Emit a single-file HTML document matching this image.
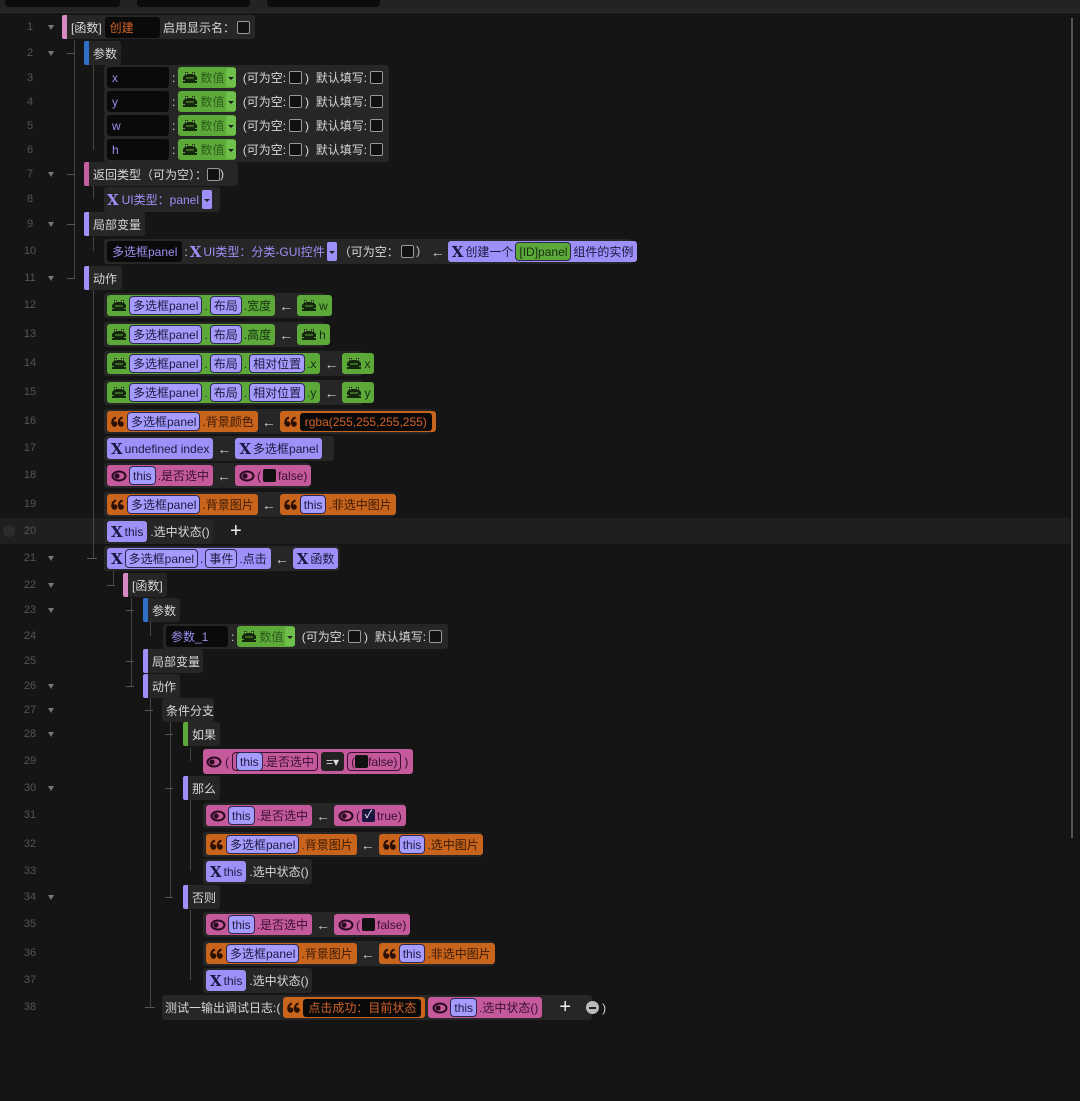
<!DOCTYPE html>
<html><head><meta charset="utf-8"><style>
*{box-sizing:border-box;margin:0;padding:0}
body{width:1080px;height:1101px;background:#151515;position:relative;overflow:hidden;font-family:"Liberation Sans","Noto Sans CJK SC",sans-serif;font-size:12px;color:#d8d8d8}
.top{position:absolute;left:0;top:0;width:1080px;height:13px;background:#232323;border-bottom:1px solid #2e2e2e}
.tab{position:absolute;top:0;height:7px;background:#0c0c0c;border-radius:0 0 4px 4px}
.ln{position:absolute;left:14px;width:32px;text-align:center;color:#555;font-size:11px;line-height:14px}
.fold{position:absolute;left:48px;width:0;height:0;border-left:3px solid transparent;border-right:3px solid transparent;border-top:5px solid #777}
.r{position:absolute;height:25px;display:flex;align-items:center;background:#262626;border-radius:3px;padding:0 3px;white-space:nowrap;gap:3px}
.r *{flex-shrink:0}
.lb{position:absolute;height:24px;display:flex;align-items:center;background:#262626;border-radius:3px;padding:0 5px 0 9px;white-space:nowrap}
.bar{position:absolute;left:0;top:0;width:5px;height:100%;border-radius:2px 0 0 2px}
.c{display:inline-flex;align-items:center;height:21px;border-radius:3px;padding:0 4px;gap:2px}
.p{background:#9d90f8;color:#1d1a40}
.g{background:#5ca93a;color:#163010}
.k{background:#c45a9b;color:#3a1030}
.o{background:#c9641c;color:#3a1a05}
.i{display:inline-flex;align-items:center;height:19px;border:1px solid #2c2850;border-radius:4px;background:#a69cfd;color:#1d1a40;padding:0 3px}
.in{display:inline-flex;align-items:center;height:21px;background:#0a0a0a;border-radius:3px;padding:0 5px;color:#9a8ff0}
.cb{display:inline-block;width:13px;height:13px;border:1.5px solid #999;background:#111;border-radius:2px;vertical-align:middle;flex-shrink:0}
.dd{display:inline-block;width:10px;height:19px;border-radius:2px;position:relative}
.dd:after{content:"";position:absolute;left:2px;top:9px;border-left:3px solid transparent;border-right:3px solid transparent;border-top:3px solid #222}
.ar{color:#ccc;margin:0 1px;font-size:14px}
.vl{position:absolute;width:1px;background:#444}
.hl{position:absolute;height:1px;background:#555}
.x{font-family:"DejaVu Serif",serif;font-weight:bold;font-size:15px;color:#1a1640}
svg{flex-shrink:0}
</style></head><body>
<svg width="0" height="0" style="position:absolute"><defs>
<g id="fr"><path d="M3 1h3v2h4V1h3v3l2 2v3h-2v1h2v2H1v-2h2V9H1V6l2-2z" fill="#14260c"/><circle cx="4.5" cy="2.5" r="1" fill="#8fd070"/><circle cx="11.5" cy="2.5" r="1" fill="#8fd070"/><path d="M4 7h8" stroke="#5ca93a" stroke-width="1"/></g>
<g id="ey"><ellipse cx="8" cy="6" rx="6.5" ry="4.5" fill="none" stroke="#2a0a20" stroke-width="2"/><circle cx="6" cy="6" r="2.6" fill="#2a0a20"/></g>
<g id="qt"><circle cx="3.5" cy="8" r="2.8" fill="#2a1004"/><path d="M1.2 8Q1 2.5 5 1.5" stroke="#2a1004" stroke-width="2" fill="none"/><circle cx="10" cy="8" r="2.8" fill="#2a1004"/><path d="M7.7 8Q7.5 2.5 11.5 1.5" stroke="#2a1004" stroke-width="2" fill="none"/></g>
</defs></svg>
<div class="top"><div class="tab" style="left:5px;width:115px"></div><div class="tab" style="left:137px;width:113px"></div><div class="tab" style="left:267px;width:113px"></div></div>
<div style="position:absolute;left:1071px;top:18px;width:2px;height:820px;background:#555"></div>
<div style="position:absolute;left:0;top:518px;width:1070px;height:26px;background:#1f1f1f"></div>
<div style="position:absolute;left:3px;top:525px;width:12px;height:12px;border-radius:50%;background:#2c2c2c"></div>

<div class="ln" style="top:20px">1</div><div class="ln" style="top:46px">2</div><div class="ln" style="top:71px">3</div><div class="ln" style="top:95px">4</div><div class="ln" style="top:119px">5</div><div class="ln" style="top:143px">6</div><div class="ln" style="top:167px">7</div><div class="ln" style="top:192px">8</div><div class="ln" style="top:217px">9</div><div class="ln" style="top:244px">10</div><div class="ln" style="top:271px">11</div><div class="ln" style="top:298px">12</div><div class="ln" style="top:327px">13</div><div class="ln" style="top:356px">14</div><div class="ln" style="top:385px">15</div><div class="ln" style="top:414px">16</div><div class="ln" style="top:441px">17</div><div class="ln" style="top:468px">18</div><div class="ln" style="top:497px">19</div><div class="ln" style="top:524px">20</div><div class="ln" style="top:551px">21</div><div class="ln" style="top:578px">22</div><div class="ln" style="top:603px">23</div><div class="ln" style="top:629px">24</div><div class="ln" style="top:654px">25</div><div class="ln" style="top:679px">26</div><div class="ln" style="top:703px">27</div><div class="ln" style="top:727px">28</div><div class="ln" style="top:754px">29</div><div class="ln" style="top:781px">30</div><div class="ln" style="top:808px">31</div><div class="ln" style="top:837px">32</div><div class="ln" style="top:864px">33</div><div class="ln" style="top:890px">34</div><div class="ln" style="top:917px">35</div><div class="ln" style="top:946px">36</div><div class="ln" style="top:973px">37</div><div class="ln" style="top:1000px">38</div>
<div class="fold" style="top:25px"></div><div class="fold" style="top:51px"></div><div class="fold" style="top:172px"></div><div class="fold" style="top:222px"></div><div class="fold" style="top:276px"></div><div class="fold" style="top:556px"></div><div class="fold" style="top:583px"></div><div class="fold" style="top:608px"></div><div class="fold" style="top:684px"></div><div class="fold" style="top:708px"></div><div class="fold" style="top:732px"></div><div class="fold" style="top:786px"></div><div class="fold" style="top:895px"></div>

<div class="vl" style="left:74px;top:40px;height:238px"></div>
<div class="hl" style="left:67px;top:53px;width:8px"></div><div class="hl" style="left:67px;top:174px;width:8px"></div><div class="hl" style="left:67px;top:224px;width:8px"></div><div class="hl" style="left:67px;top:278px;width:8px"></div>
<div class="vl" style="left:93px;top:65px;height:85px"></div><div class="vl" style="left:93px;top:186px;height:13px"></div><div class="vl" style="left:93px;top:237px;height:14px"></div><div class="vl" style="left:93px;top:290px;height:268px"></div>
<div class="hl" style="left:87px;top:558px;width:10px"></div>
<div class="vl" style="left:113px;top:570px;height:15px"></div><div class="hl" style="left:107px;top:585px;width:8px"></div>
<div class="vl" style="left:131px;top:598px;height:88px"></div>
<div class="hl" style="left:126px;top:610px;width:8px"></div><div class="hl" style="left:126px;top:661px;width:8px"></div><div class="hl" style="left:126px;top:686px;width:8px"></div>
<div class="vl" style="left:150px;top:622px;height:14px"></div><div class="vl" style="left:150px;top:698px;height:309px"></div>
<div class="hl" style="left:145px;top:710px;width:8px"></div><div class="hl" style="left:145px;top:1007px;width:10px"></div>
<div class="vl" style="left:170px;top:722px;height:175px"></div>
<div class="hl" style="left:165px;top:734px;width:8px"></div><div class="hl" style="left:165px;top:788px;width:8px"></div><div class="hl" style="left:165px;top:897px;width:8px"></div>
<div class="vl" style="left:190px;top:748px;height:13px"></div><div class="vl" style="left:190px;top:800px;height:71px"></div><div class="vl" style="left:190px;top:910px;height:70px"></div>

<div class="lb" style="left:62px;top:15px;width:193px"><div class="bar" style="background:#d58ac4"></div>[函数]<span class="in" style="color:#d2622a;width:60px;margin:0 3px">创建</span>启用显示名：<span class="cb" style="margin-left:2px"></span></div>
<div class="lb" style="left:84px;top:41px;width:37px"><div class="bar" style="background:#2d6fc9"></div>参数</div>
<div class="r" style="left:104px;top:65px;width:285px"><span class="in" style="width:62px">x</span>:<span class="c g" style="padding-right:0"><svg width="16" height="13"><use href="#fr"/></svg><span style="color:#2e5a1c">数值</span><span class="dd" style="background:#6fc04a"></span></span>&nbsp;(可为空:<span class="cb"></span>)&nbsp; 默认填写:<span class="cb"></span></div>
<div class="r" style="left:104px;top:89px;width:285px"><span class="in" style="width:62px">y</span>:<span class="c g" style="padding-right:0"><svg width="16" height="13"><use href="#fr"/></svg><span style="color:#2e5a1c">数值</span><span class="dd" style="background:#6fc04a"></span></span>&nbsp;(可为空:<span class="cb"></span>)&nbsp; 默认填写:<span class="cb"></span></div>
<div class="r" style="left:104px;top:113px;width:285px"><span class="in" style="width:62px">w</span>:<span class="c g" style="padding-right:0"><svg width="16" height="13"><use href="#fr"/></svg><span style="color:#2e5a1c">数值</span><span class="dd" style="background:#6fc04a"></span></span>&nbsp;(可为空:<span class="cb"></span>)&nbsp; 默认填写:<span class="cb"></span></div>
<div class="r" style="left:104px;top:137px;width:285px"><span class="in" style="width:62px">h</span>:<span class="c g" style="padding-right:0"><svg width="16" height="13"><use href="#fr"/></svg><span style="color:#2e5a1c">数值</span><span class="dd" style="background:#6fc04a"></span></span>&nbsp;(可为空:<span class="cb"></span>)&nbsp; 默认填写:<span class="cb"></span></div>
<div class="lb" style="left:84px;top:162px;width:154px"><div class="bar" style="background:#c4609f"></div>返回类型（可为空）：<span class="cb"></span>)</div>
<div class="r" style="left:104px;top:187px;width:116px"><span class="x" style="color:#9d90f8">X</span><span style="color:#9d90f8">UI类型：panel</span><span class="dd" style="background:#9d90f8"></span></div>
<div class="lb" style="left:84px;top:212px;width:61px"><div class="bar" style="background:#9d90f8"></div>局部变量</div>
<div class="r" style="left:104px;top:239px;width:528px;gap:2px"><span class="in">多选框panel</span>:<span class="x" style="color:#9d90f8">X</span><span style="color:#9d90f8">UI类型：分类-GUI控件</span><span class="dd" style="background:#9d90f8"></span>（可为空：<span class="cb"></span>）<span class="ar">←</span><span class="c p"><span class="x">X</span>创建一个<span class="i" style="background:#5ca93a;color:#183010">[ID]panel</span>组件的实例</span></div>
<div class="lb" style="left:84px;top:266px;width:38px"><div class="bar" style="background:#9d90f8"></div>动作</div>

<div class="r" style="left:104px;top:293px;width:222px"><span class="c g"><svg width="16" height="13"><use href="#fr"/></svg><span class="i">多选框panel</span>.<span class="i">布局</span>.宽度</span><span class="ar">←</span><span class="c g"><svg width="16" height="13"><use href="#fr"/></svg>w</span></div>
<div class="r" style="left:104px;top:322px;width:221px"><span class="c g"><svg width="16" height="13"><use href="#fr"/></svg><span class="i">多选框panel</span>.<span class="i">布局</span>.高度</span><span class="ar">←</span><span class="c g"><svg width="16" height="13"><use href="#fr"/></svg>h</span></div>
<div class="r" style="left:104px;top:351px;width:259px"><span class="c g"><svg width="16" height="13"><use href="#fr"/></svg><span class="i">多选框panel</span>.<span class="i">布局</span>.<span class="i">相对位置</span>.x</span><span class="ar">←</span><span class="c g"><svg width="16" height="13"><use href="#fr"/></svg>x</span></div>
<div class="r" style="left:104px;top:380px;width:259px"><span class="c g"><svg width="16" height="13"><use href="#fr"/></svg><span class="i">多选框panel</span>.<span class="i">布局</span>.<span class="i">相对位置</span>.y</span><span class="ar">←</span><span class="c g"><svg width="16" height="13"><use href="#fr"/></svg>y</span></div>
<div class="r" style="left:104px;top:409px;width:328px"><span class="c o"><svg width="14" height="12"><use href="#qt"/></svg><span class="i">多选框panel</span>.背景颜色</span><span class="ar">←</span><span class="c o"><svg width="14" height="12"><use href="#qt"/></svg><span class="in" style="color:#d2622a;height:18px">rgba(255,255,255,255)</span></span></div>
<div class="r" style="left:104px;top:436px;width:230px"><span class="c p"><span class="x">X</span>undefined index</span><span class="ar">←</span><span class="c p"><span class="x">X</span>多选框panel</span></div>
<div class="r" style="left:104px;top:463px;width:206px"><span class="c k"><svg width="16" height="12"><use href="#ey"/></svg><span class="i">this</span>.是否选中</span><span class="ar">←</span><span class="c k"><svg width="16" height="12"><use href="#ey"/></svg>(<span class="cb" style="border:none;background:#111"></span> false)</span></div>
<div class="r" style="left:104px;top:492px;width:291px"><span class="c o"><svg width="14" height="12"><use href="#qt"/></svg><span class="i">多选框panel</span>.背景图片</span><span class="ar">←</span><span class="c o"><svg width="14" height="12"><use href="#qt"/></svg><span class="i">this</span>.非选中图片</span></div>
<div class="r" style="left:104px;top:519px;width:109px"><span class="c p"><span class="x">X</span>this</span>.选中状态()</div>
<div style="position:absolute;left:230px;top:520px;font-size:20px;color:#eee">+</div>
<div class="r" style="left:104px;top:546px;width:236px"><span class="c p"><span class="x">X</span><span class="i">多选框panel</span>.<span class="i">事件</span>.点击</span><span class="ar">←</span><span class="c p"><span class="x">X</span>函数</span></div>
<div class="lb" style="left:123px;top:573px;width:44px"><div class="bar" style="background:#d58ac4"></div>[函数]</div>
<div class="lb" style="left:143px;top:598px;width:37px"><div class="bar" style="background:#2d6fc9"></div>参数</div>
<div class="r" style="left:163px;top:624px;width:285px"><span class="in" style="width:62px">参数_1</span>:<span class="c g" style="padding-right:0"><svg width="16" height="13"><use href="#fr"/></svg><span style="color:#2e5a1c">数值</span><span class="dd" style="background:#6fc04a"></span></span>&nbsp;(可为空:<span class="cb"></span>)&nbsp; 默认填写:<span class="cb"></span></div>
<div class="lb" style="left:143px;top:649px;width:60px"><div class="bar" style="background:#9d90f8"></div>局部变量</div>
<div class="lb" style="left:143px;top:674px;width:37px"><div class="bar" style="background:#9d90f8"></div>动作</div>
<div class="lb" style="left:162px;top:698px;width:52px;padding-left:4px">条件分支</div>
<div class="lb" style="left:183px;top:722px;width:37px"><div class="bar" style="background:#5ca93a"></div>如果</div>
<div class="r" style="left:203px;top:749px;width:210px;background:#c45a9b;color:#3a1030"><svg width="16" height="12"><use href="#ey"/></svg>(<span class="i" style="background:#c45a9b;border-color:#3a1030;color:#3a1030"><span class="i">this</span>.是否选中</span><span class="in" style="color:#ddd;height:19px;background:#222">=▾</span><span class="i" style="background:#c45a9b;border-color:#3a1030;color:#3a1030">(<span class="cb" style="border:none;background:#111"></span> false)</span>)</div>
<div class="lb" style="left:183px;top:776px;width:37px"><div class="bar" style="background:#9d90f8"></div>那么</div>
<div class="r" style="left:203px;top:803px;width:202px"><span class="c k"><svg width="16" height="12"><use href="#ey"/></svg><span class="i">this</span>.是否选中</span><span class="ar">←</span><span class="c k"><svg width="16" height="12"><use href="#ey"/></svg>(<span class="cb" style="border:none;background:#1a1640;color:#fff;font-size:11px;line-height:13px;text-align:center">✓</span> true)</span></div>
<div class="r" style="left:203px;top:832px;width:279px"><span class="c o"><svg width="14" height="12"><use href="#qt"/></svg><span class="i">多选框panel</span>.背景图片</span><span class="ar">←</span><span class="c o"><svg width="14" height="12"><use href="#qt"/></svg><span class="i">this</span>.选中图片</span></div>
<div class="r" style="left:203px;top:859px;width:109px"><span class="c p"><span class="x">X</span>this</span>.选中状态()</div>
<div class="lb" style="left:183px;top:885px;width:37px"><div class="bar" style="background:#9d90f8"></div>否则</div>
<div class="r" style="left:203px;top:912px;width:206px"><span class="c k"><svg width="16" height="12"><use href="#ey"/></svg><span class="i">this</span>.是否选中</span><span class="ar">←</span><span class="c k"><svg width="16" height="12"><use href="#ey"/></svg>(<span class="cb" style="border:none;background:#111"></span> false)</span></div>
<div class="r" style="left:203px;top:941px;width:291px"><span class="c o"><svg width="14" height="12"><use href="#qt"/></svg><span class="i">多选框panel</span>.背景图片</span><span class="ar">←</span><span class="c o"><svg width="14" height="12"><use href="#qt"/></svg><span class="i">this</span>.非选中图片</span></div>
<div class="r" style="left:203px;top:968px;width:109px"><span class="c p"><span class="x">X</span>this</span>.选中状态()</div>
<div class="r" style="left:162px;top:995px;width:430px">测试一输出调试日志:(<span class="c o"><svg width="14" height="12"><use href="#qt"/></svg><span class="in" style="color:#d2622a;height:18px">点击成功：目前状态</span></span><span class="c k"><svg width="16" height="12"><use href="#ey"/></svg><span class="i">this</span>.选中状态()</span><span style="font-size:20px;color:#eee;margin:0 12px 0 14px">+</span><span style="display:inline-block;width:13px;height:13px;border-radius:50%;background:#bbb;position:relative"><span style="position:absolute;left:3px;top:6px;width:7px;height:2px;background:#222"></span></span>)</div>
</body></html>
